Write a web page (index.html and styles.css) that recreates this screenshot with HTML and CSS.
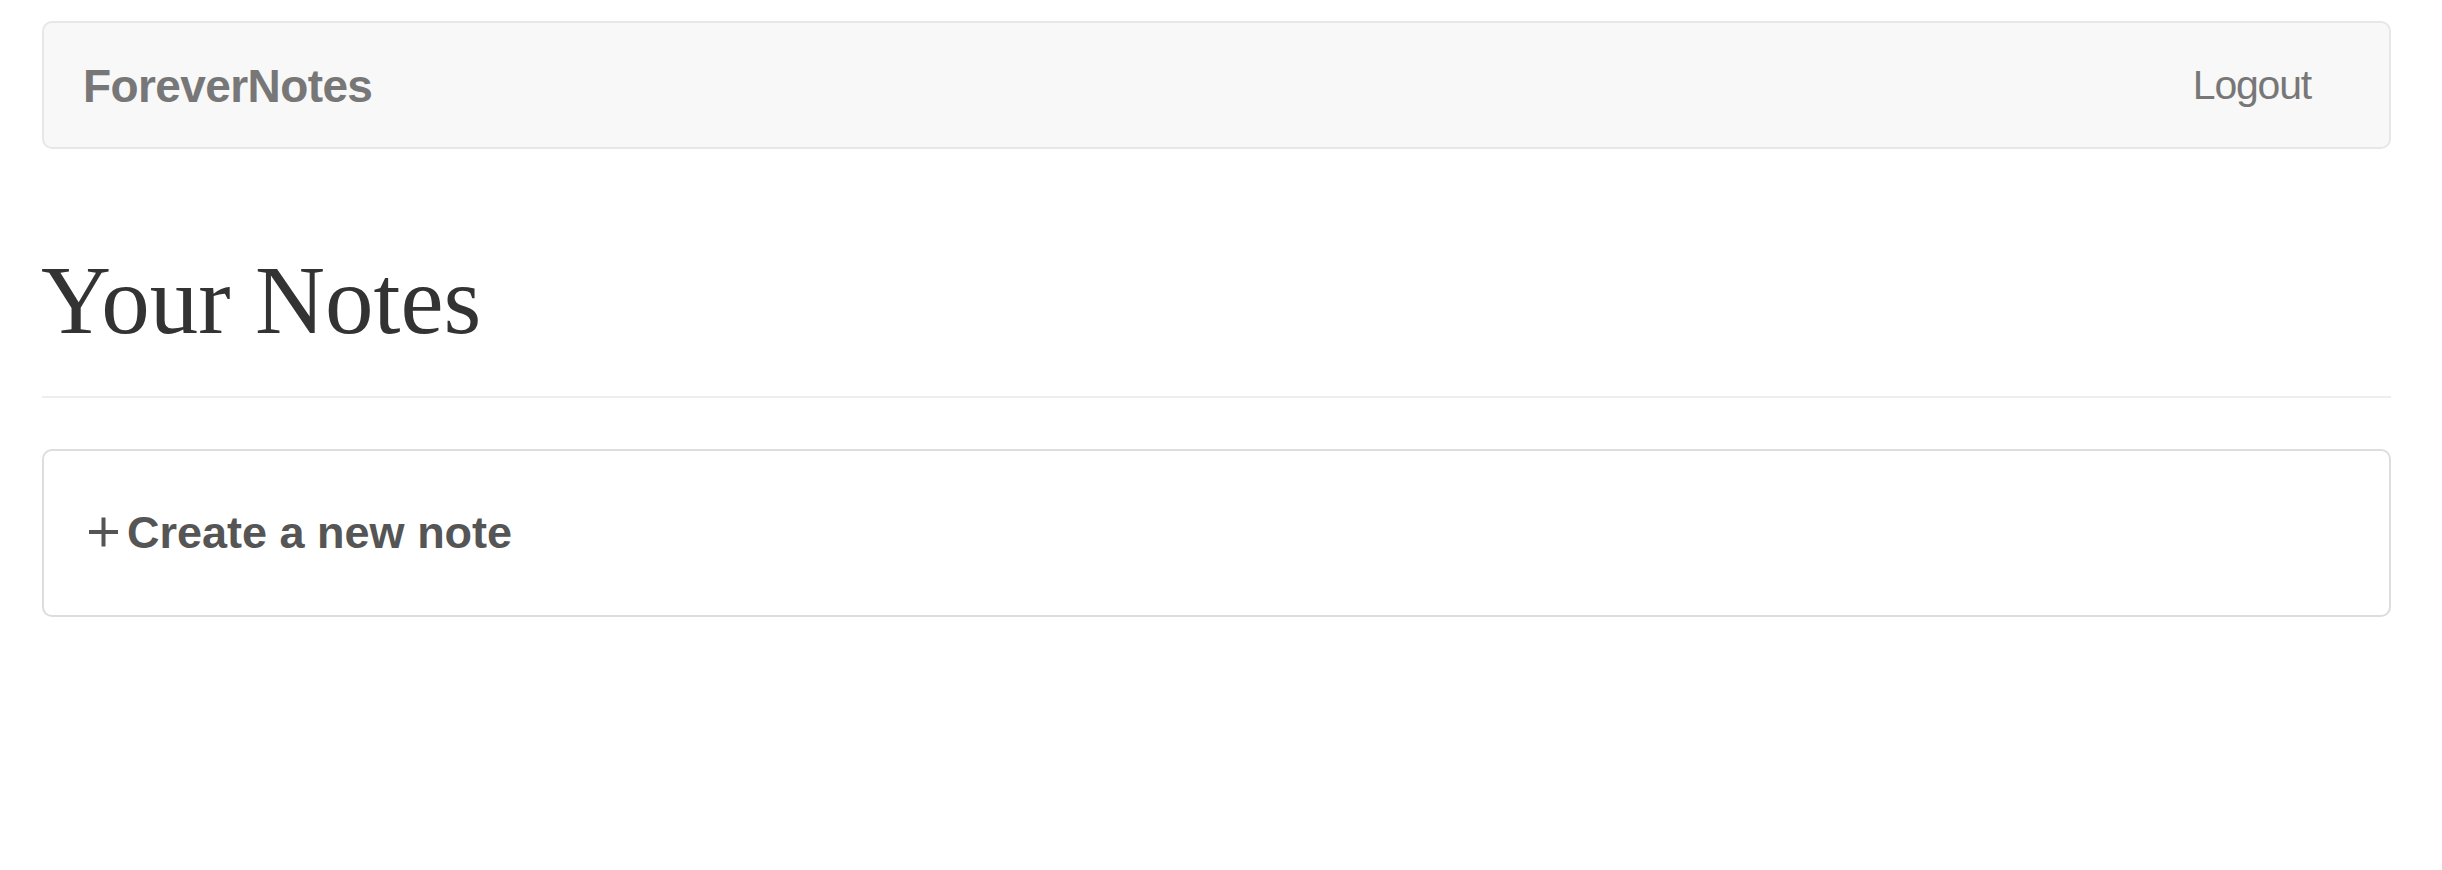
FILE: index.html
```html
<!DOCTYPE html>
<html>
<head>
<meta charset="utf-8">
<title>ForeverNotes</title>
<link rel="stylesheet" href="styles.css">
</head>
<body>
<div class="container">
  <nav class="navbar">
    <a class="brand" href="#">ForeverNotes</a>
    <a class="logout" href="#">Logout</a>
  </nav>
  <h1 class="page-title">Your Notes</h1>
  <hr class="divider">
  <div class="card">
    <a class="create" href="#">
      <svg class="plus" width="29" height="34" viewBox="0 0 29 34"><rect x="0" y="15" width="29" height="4" fill="#555"/><rect x="12.5" y="2.5" width="4" height="29" fill="#555"/></svg>
      <span>Create a new note</span>
    </a>
  </div>
</div>
</body>
</html>
```
FILE: styles.css
```css
html, body {
  margin: 0;
  padding: 0;
  background: #fff;
}
.container {
  padding: 21px 51px 0 42px;
  font-family: "Liberation Sans", Arial, sans-serif;
}
.navbar {
  box-sizing: border-box;
  height: 128px;
  background: #f8f8f8;
  border: 2px solid #e7e7e7;
  border-radius: 10px;
  display: flex;
  align-items: center;
  justify-content: space-between;
  padding: 0 78px 0 39px;
}
.brand {
  color: #777;
  font-weight: bold;
  font-size: 46px;
  letter-spacing: -0.6px;
  text-decoration: none;
  line-height: 1;
  padding-top: 2px;
}
.logout {
  color: #777;
  font-size: 41px;
  letter-spacing: -1.2px;
  text-decoration: none;
  line-height: 1;
}
.page-title {
  font-family: "Liberation Serif", "Times New Roman", serif;
  font-weight: normal;
  font-size: 97px;
  line-height: 107px;
  color: #333;
  margin: 98px 0 0 -1px;
}
.divider {
  border: 0;
  border-top: 2px solid #eee;
  margin: 42px 0 0 0;
  height: 0;
}
.card {
  box-sizing: border-box;
  margin-top: 51px;
  height: 168px;
  border: 2px solid #ddd;
  border-radius: 10px;
  display: flex;
  align-items: center;
  padding: 0 0 0 45px;
}
.create {
  display: flex;
  align-items: center;
  gap: 9px;
  color: #555;
  font-weight: bold;
  font-size: 45px;
  text-decoration: none;
  line-height: 1;
  padding-bottom: 2px;
}
.plus {
  display: block;
}
```
